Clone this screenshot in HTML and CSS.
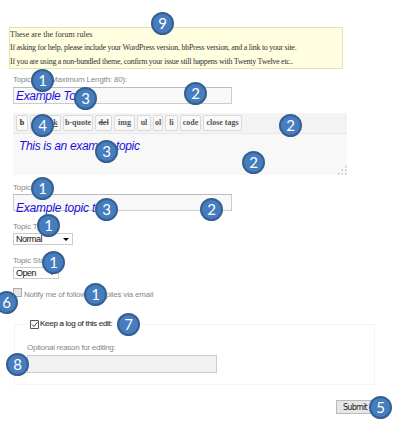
FILE: index.html
```
<!DOCTYPE html>
<html lang="en">
<head>
<meta charset="utf-8">
<title>Edit topic</title>
<link rel="stylesheet" href="styles.css">
</head>
<body>
<main class="page">
  <section class="rules">
    <p class="r1">These are the forum rules</p>
    <p class="r2">If asking for help, please include your WordPress version, bbPress version, and a link to your site.</p>
    <p class="r3">If you are using a non-bundled theme, confirm your issue still happens with Twenty Twelve etc..</p>
  </section>
  <form class="form">
    <div class="label title-label">Topic Title (Maximum Length: 80):</div>
    <div class="field example">Example Topic</div>
    <div class="editor">
      <div class="toolbar">
        <span class="tool w-b">b</span><span class="tool w-i">i</span><span class="tool w-link"><u>link</u></span><span class="tool w-quote">b-quote</span><span class="tool w-del"><s>del</s></span><span class="tool w-img">img</span><span class="tool w-ul">ul</span><span class="tool w-ol">ol</span><span class="tool w-li">li</span><span class="tool w-code">code</span><span class="tool w-close">close tags</span>
      </div>
      <div class="content example">This is an example topic
        <svg class="grip" width="9" height="9" viewBox="0 0 9 9"><path fill="#c4c4c4" d="M7 0h1.5v1.5H7zM3.5 3.5H5V5H3.5zM7 3.5h1.5V5H7zM0 7h1.5v1.5H0zM3.5 7H5v1.5H3.5zM7 7h1.5v1.5H7z"/></svg>
      </div>
    </div>
    <div class="label tags-label">Topic Tags:</div>
    <div class="field tags example">Example topic tags</div>
    <div class="label type-label">Topic Type:</div>
    <div class="select">Normal<svg width="6" height="3" viewBox="0 0 6 3"><path d="M0 0h6L3 3z"/></svg></div>
    <div class="label status-label">Topic Status:</div>
    <div class="select short">Open<svg width="6" height="3" viewBox="0 0 6 3"><path d="M0 0h6L3 3z"/></svg></div>
    <div class="notify"><span class="check"></span><span class="label">Notify me of follow-up replies via email</span></div>
    <section class="log">
      <div class="legend"><svg width="9" height="9" viewBox="0 0 9 9"><path fill="#fff" stroke="#555" d="M.5.5h8v8h-8z"/><path fill="none" stroke="#444" d="M2 4.5l2 2 3.5-4.5"/></svg><span>Keep a log of this edit:</span></div>
      <div class="label reason-label">Optional reason for editing:</div>
      <div class="reason"></div>
    </section>
    <div class="submit">Submit</div>
  </form>
  <span class="badge n9">9</span>
  <span class="badge a1">1</span><span class="badge a3">3</span><span class="badge a2">2</span>
  <span class="badge b4">4</span><span class="badge b3">3</span><span class="badge b2">2</span><span class="badge c2">2</span>
  <span class="badge d1">1</span><span class="badge d3">3</span><span class="badge d2">2</span>
  <span class="badge e1">1</span><span class="badge f1">1</span><span class="badge g1">1</span>
  <span class="badge n6">6</span><span class="badge n7">7</span><span class="badge n8">8</span><span class="badge n5">5</span>
</main>
</body>
</html>
```
FILE: styles.css
```
* { box-sizing: border-box; }
body { margin: 0; background: #fff; }
.page { position: relative; width: 411px; height: 434px; overflow: hidden; padding: 27px 0 0 9px; white-space: nowrap; font-family: "Liberation Sans", sans-serif; }
.rules { width: 334px; height: 42px; border: 1px solid #e9e3a8; background: #fffee0; font: 8px/13.4px "Liberation Serif", serif; color: #333; }
.rules p { margin: 0; }
.r1 { letter-spacing: 0.03px; }
.r2 { letter-spacing: -0.27px; }
.r3 { letter-spacing: -0.27px; }
.form { margin-left: 4px; }
.label { font-size: 8px; line-height: 10px; color: #888; letter-spacing: -0.18px; }
.title-label { margin-top: 6px; }
.field { width: 219px; height: 17px; margin-top: 2px; border: 1px solid #ccc; border-top-color: #bbb; background: #f8f8f8; padding-left: 2px; line-height: 17px; }
.example { font-style: italic; font-size: 12px; color: #1c10e0; letter-spacing: -0.34px; }
.editor { width: 334px; margin-top: 9px; background: #f8f8f8; }
.toolbar { display: flex; gap: 2px; height: 21px; padding: 2px 3px; background: #f3f3f3; border-bottom: 1px solid #e8e8e8; }
.tool { height: 16px; border: 1px solid #d9d9d9; border-radius: 2px; background: #f9f9f9; color: #555; font: bold 8px/14px "Liberation Serif", serif; text-align: center; flex: none; }
.w-b { width: 12px; color: #222; }
.w-i { width: 9px; font-style: italic; }
.w-link { width: 20px; }
.w-quote { width: 30px; }
.w-del { width: 17px; }
.w-img { width: 21px; }
.w-ul { width: 14px; }
.w-ol { width: 10px; }
.w-li { width: 13px; }
.w-code { width: 21px; }
.w-close { width: 39px; }
.content { display: flex; justify-content: space-between; height: 41px; padding: 5px 0 0 6px; line-height: 15px; }
.grip { align-self: flex-end; }
.tags-label { margin-top: 8px; }
.tags { margin-top: 1px; line-height: 27px; letter-spacing: -0.2px; }
.type-label { margin-top: 11px; }
.select { display: flex; align-items: center; justify-content: space-between; width: 60px; height: 12px; margin-top: 1px; padding: 0 3px 0 2px; border: 1px solid #ccc; background: #fff; font-size: 9px; line-height: 10px; letter-spacing: -0.5px; color: #111; }
.short { width: 46px; }
.status-label { margin-top: 11px; }
.notify { display: flex; height: 11px; margin-top: 9px; }
.check { width: 9px; height: 9px; border: 1px solid #aaa; background: #e9e7e4; margin-right: 2px; }
.notify .label { padding-top: 2px; }
.log { width: 361px; height: 61px; margin: 25px 0 0 1px; border: 1px solid #f4f4f4; padding-left: 12px; }
.legend { display: flex; align-items: center; gap: 1px; width: max-content; height: 10px; margin: -6px 0 0 2px; padding: 0 2px 0 1px; background: #fff; font-size: 8px; line-height: 10px; letter-spacing: -0.28px; color: #444; -webkit-text-stroke: 0.2px #444; }
.reason-label { margin-top: 14px; letter-spacing: -0.27px; }
.reason { width: 190px; height: 18px; margin-top: 2px; border: 1px solid #ccc; background: #f1f1f1; }
.submit { width: 42px; height: 14px; margin: 15px 0 0 323px; border: 1px solid #bbb; background: #e6e6e6; padding-left: 6px; font: 8px/13px "DejaVu Sans", sans-serif; letter-spacing: -0.75px; color: #222; }
.badge { position: absolute; width: 23px; height: 23px; border: 2px solid #365f91; border-radius: 50%; background: #457dbe; color: #fff; font: 15px/19px Lato, sans-serif; text-align: center; }
.n9 { left: 151px; top: 12px; }
.a1 { left: 31px; top: 69px; }
.a3 { left: 74px; top: 87px; }
.a2 { left: 184px; top: 82px; }
.b4 { left: 31px; top: 114px; }
.b3 { left: 95px; top: 140px; }
.b2 { left: 279px; top: 114px; }
.c2 { left: 242px; top: 151px; }
.d1 { left: 31px; top: 177px; }
.d3 { left: 95px; top: 198px; }
.d2 { left: 200px; top: 198px; }
.e1 { left: 37px; top: 214px; }
.f1 { left: 42px; top: 251px; }
.g1 { left: 84px; top: 283px; }
.n6 { left: -5px; top: 291px; }
.n7 { left: 117px; top: 313px; }
.n8 { left: 6px; top: 353px; }
.n5 { left: 369px; top: 396px; }
```
